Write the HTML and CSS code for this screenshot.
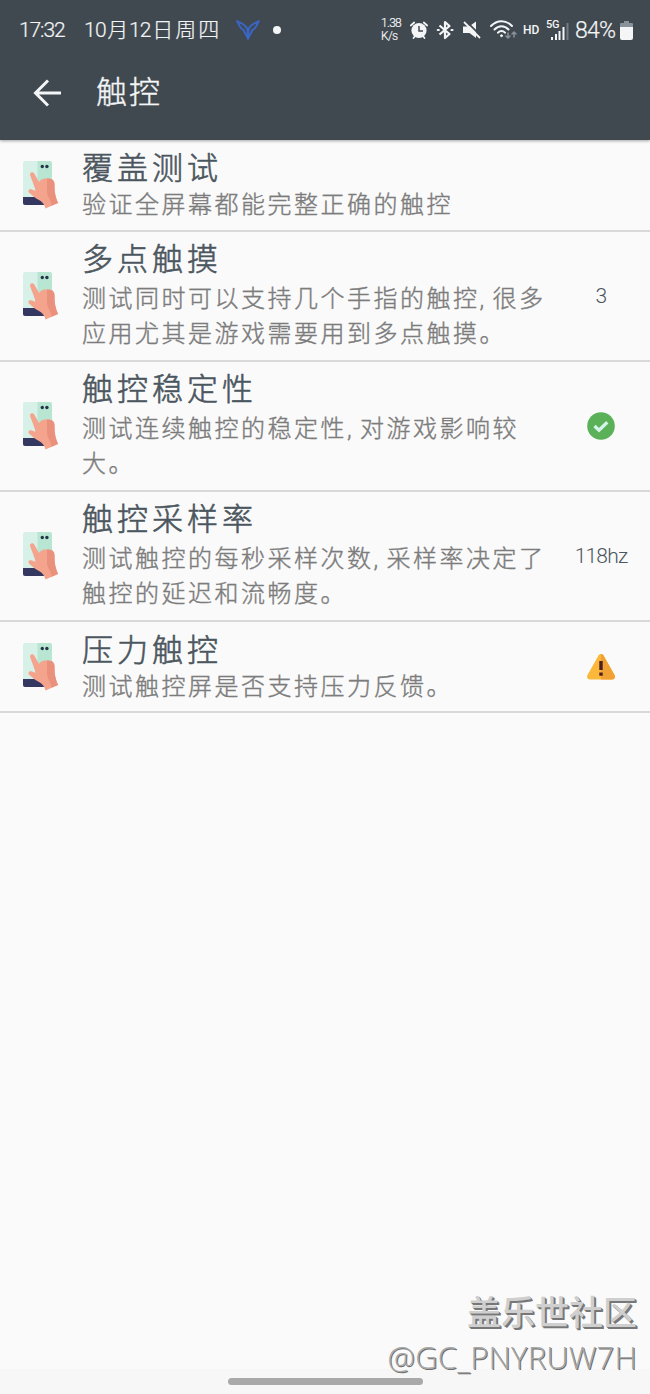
FILE: index.html
```html
<!DOCTYPE html>
<html lang="zh">
<head>
  <meta charset="UTF-8" />
  <meta name="viewport" content="width=device-width, initial-scale=1.0" />
  <title>触控</title>
  <link rel="stylesheet" href="styles.css">
</head>
<body>
  <!-- 图标定义 -->
  <svg class="defs" width="0" height="0">
    <symbol id="touch" viewBox="0 0 36 48">
      <path fill="#d8f1e8" d="M2 0h13v44H2a2 2 0 0 1-2-2V2a2 2 0 0 1 2-2z" />
      <path fill="#b9e5d3" d="M14.500 0H27a2 2 0 0 1 2 2v42H14.500z" />
      <path fill="#343860" d="M0 36h22v8H2a2 2 0 0 1-2-2z" />
      <circle cx="19.300" cy="5.500" r="1.700" fill="#243746" />
      <circle cx="23.900" cy="5.500" r="1.700" fill="#243746" />
      <path fill="#f4a38c" d="M7.200 14.500c-1-3.500 3-4.500 4.300-1.500L16 21c1.500-2 3.500-3.200 6-3.400 6-.8 10 1.400 9.500 7.400-.2 6 1 11 3.500 17L22.500 47.500c-1-4-3-6.500-6.500-8.500-4-2-6-4-9-6.500-3-2.500-1-5 2-4l3.500 1.200c-1-5-3.500-10-5.300-15.200z" />
      <path fill="#e9917c" d="M24 17.600c6-.4 8 2.400 7.500 7.400-.2 6 1 11 3.500 17l-6.500 2.800C28 38 24 36 24 31z" />
    </symbol>
  </svg>

  <header class="header">
    <div class="status-bar">
      <span class="time">17:32</span>
      <span class="date">10<i>月</i>12<i>日</i><i>周</i><i>四</i></span>
      <svg class="bird" width="24" height="20" viewBox="0 0 24 20" fill="none" stroke="#3a66c8" stroke-width="2">
        <path d="M1.500 1.500C4 2.500 9 4 11 8.500c.8 2 1 5 1 8.500 0-3.500.2-6.500 1-8.500 2-4.500 7-6 9.500-7-1.500 4-3 7-6 8.500L12 18.500 7.500 10c-3-1.500-4.500-4.500-6-8.500z" />
      </svg>
      <span class="dot"></span>
      <div class="status-icons">
        <span class="speed">1.38<br>K/s</span>
        <svg class="alarm" width="18" height="18" viewBox="0 0 18 18">
          <circle cx="9" cy="9.500" r="7.600" fill="#f3f5f6" />
          <path d="M.8 4.500l3.400-3M17.200 4.500l-3.400-3M3.500 17l2-2.500M14.500 17l-2-2.500" stroke="#f3f5f6" stroke-width="1.700" stroke-linecap="round" />
          <path d="M9 5v5h4" fill="none" stroke="#414950" stroke-width="1.500" />
        </svg>
        <svg class="bt" width="18" height="20" viewBox="0 0 18 20" fill="none" stroke="#f3f5f6" stroke-width="2.200">
          <path d="M3.500 5.500l10 8.500L9 18V2l4.500 4-10 8.500" stroke-linejoin="round" />
          <path d="M1.800 10h1M15.500 10h1" stroke-linecap="round" />
        </svg>
        <svg class="mute" width="18" height="18" viewBox="0 0 18 18" fill="#f3f5f6">
          <path d="M0 5.500h6L13 .5V17l-6.500-5H0z" />
          <path d="M2.500-.5l17 17" stroke="#414950" stroke-width="1.800" />
          <path d="M1 1l16 16" stroke="#f3f5f6" stroke-width="1.800" />
        </svg>
        <svg class="wifi" width="27" height="20" viewBox="0 0 27 20" fill="none" stroke="#f3f5f6" stroke-width="2" stroke-linecap="round">
          <path d="M1 6c6-6.500 15-6.500 21 0M4.500 9.500c4-4.500 10-4.500 14 0M8 12.700c2-2.300 5-2.300 7 0" />
          <circle cx="11.500" cy="15.700" r="1" fill="#f3f5f6" stroke-width="1" />
          <path stroke="#89929a" stroke-width="1.500" d="M18 13v5M16 16l2 2 2-2M24 17v-5M22 14l2-2 2 2" />
        </svg>
        <span class="hd">HD</span>
        <div class="signal">
          <span class="net">5G</span>
          <svg width="20" height="17" viewBox="0 0 20 17">
            <path fill="#f3f5f6" d="M1 14h2v3H1zM5 11h2v6H5zM8.500 8h2v9h-2zM12.500 4h2v13h-2z" />
            <path fill="#737c83" d="M16.500 0h2v17h-2z" />
          </svg>
        </div>
        <span class="percent">84%</span>
        <svg class="battery" width="13" height="19" viewBox="0 0 13 19">
          <path fill="#88929a" d="M4 0h5v2h3a1 1 0 0 1 1 1v5H0V3a1 1 0 0 1 1-1h3z" />
          <path fill="#f3f5f6" d="M0 6h13v11a2 2 0 0 1-2 2H2a2 2 0 0 1-2-2z" />
        </svg>
      </div>
    </div>
    <div class="toolbar">
      <svg width="28" height="28" viewBox="0 0 28 28" fill="none" stroke="#f3f5f6" stroke-width="3">
        <path d="M15 1.500L2.500 14 15 26.500M2.500 14H28" />
      </svg>
      <h1>触控</h1>
    </div>
  </header>

  <main class="list">
    <section class="item">
      <svg class="item-icon"><use href="#touch" /></svg>
      <div class="item-text">
        <h2>覆盖测试</h2>
        <p>验证全屏幕都能完整正确的触控</p>
      </div>
    </section>
    <section class="item tall">
      <svg class="item-icon"><use href="#touch" /></svg>
      <div class="item-text">
        <h2>多点触摸</h2>
        <p>测试同时可以支持几个手指的触控, 很多<br>应用尤其是游戏需要用到多点触摸。</p>
      </div>
      <div class="result">3</div>
    </section>
    <section class="item tall">
      <svg class="item-icon"><use href="#touch" /></svg>
      <div class="item-text">
        <h2>触控稳定性</h2>
        <p>测试连续触控的稳定性, 对游戏影响较<br>大。</p>
      </div>
      <div class="result">
        <svg width="28" height="28" viewBox="0 0 28 28">
          <circle cx="14" cy="14" r="13.800" fill="#5bb158" />
          <path d="M7.500 14l4.500 4.200 8.300-8" fill="none" stroke="#d5f3eb" stroke-width="3.300" />
        </svg>
      </div>
    </section>
    <section class="item tall">
      <svg class="item-icon"><use href="#touch" /></svg>
      <div class="item-text">
        <h2>触控采样率</h2>
        <p>测试触控的每秒采样次数, 采样率决定了<br>触控的延迟和流畅度。</p>
      </div>
      <div class="result">118hz</div>
    </section>
    <section class="item">
      <svg class="item-icon"><use href="#touch" /></svg>
      <div class="item-text">
        <h2>压力触控</h2>
        <p>测试触控屏是否支持压力反馈。</p>
      </div>
      <div class="result">
        <svg width="28" height="26" viewBox="0 0 28 26">
          <path fill="#fbb83b" d="M11.500 1.500c1.200-2 3.800-2 5 0L27.500 21c1.200 2.500 0 4.500-2.500 4.500H3c-2.500 0-3.700-2-2.500-4.500z" />
          <path fill="#f2a233" d="M14 0c1 0 2 .5 2.500 1.500L27.500 21c1.200 2.500 0 4.500-2.500 4.500H14z" />
          <path fill="#4a2024" d="M12.300 7h3.400v9h-3.400zM12.300 18.500h3.400v3.200h-3.400z" />
        </svg>
      </div>
    </section>
  </main>

  <footer class="nav-bar"><span class="handle"></span></footer>

  <div class="watermark">
    <div class="brand">盖乐世社区</div>
    <div class="user">@GC_PNYRUW7H</div>
  </div>
</body>
</html>
```
FILE: styles.css
```css
:root {
  --bg: #fafafa;
  --header: #414950;
  --light: #f3f5f6;
  --title: #4b565e;
  --muted: #7c7c7c;
  --border: #d9d9d9;
}

* {
  box-sizing: border-box;
}

body {
  margin: 0;
  height: 1394px;
  display: flex;
  flex-direction: column;
  background: var(--bg);
  color: var(--title);
  font-family: Roboto, 'Noto Sans CJK SC', sans-serif;
  font-weight: 300;
  overflow: hidden;
}

h1, h2, p {
  margin: 0;
  font-weight: 300;
}

svg {
  display: block;
  flex: none;
}

.defs {
  position: absolute;
}

.header {
  height: 140px;
  flex: none;
  background: var(--header);
  color: var(--light);
  box-shadow: 0 1px 3px rgba(0, 0, 0, 0.35);
}

.status-bar {
  display: flex;
  align-items: center;
  height: 60px;
  padding: 0 17px 0 19px;
  white-space: nowrap;
}

.time {
  width: 65px;
  font-size: 21px;
  letter-spacing: -1.1px;
  -webkit-text-stroke: 0.2px;
}

.date {
  display: flex;
  align-items: center;
  width: 152px;
  font-size: 21px;
  line-height: 30px;
  letter-spacing: -0.7px;
  -webkit-text-stroke: 0.2px;
}

.date i {
  font-style: normal;
  width: 23px;
  text-align: center;
}

.dot {
  width: 8px;
  height: 8px;
  margin-left: 13px;
  border-radius: 50%;
  background: var(--light);
}

.status-icons {
  display: flex;
  align-items: center;
  margin-left: auto;
}

.speed {
  width: 29px;
  font-size: 12px;
  line-height: 13px;
  letter-spacing: -0.7px;
  -webkit-text-stroke: 0.2px;
}

.bt {
  margin-left: 8px;
}

.mute {
  margin-left: 9px;
}

.wifi {
  margin-left: 9px;
}

.hd {
  width: 17px;
  margin-left: 6px;
  font-size: 12px;
  font-weight: 500;
}

.signal {
  display: flex;
  align-items: flex-end;
  width: 23px;
  height: 20px;
  margin-left: 6px;
}

.net {
  align-self: flex-start;
  width: 4px;
  font-size: 11px;
  line-height: 10px;
  font-weight: 500;
  letter-spacing: -0.3px;
}

.percent {
  width: 45px;
  margin-left: 6px;
  font-size: 23px;
  letter-spacing: -0.8px;
  -webkit-text-stroke: 0.2px;
}

.toolbar {
  display: flex;
  align-items: center;
  height: 66px;
  padding-left: 33px;
}

.toolbar h1 {
  margin-left: 35px;
  font-size: 31px;
  line-height: 40px;
  letter-spacing: 2px;
  -webkit-text-stroke: 0.4px;
}

.item {
  display: flex;
  align-items: center;
  height: 92px;
  padding-left: 23px;
  border-bottom: 2px solid var(--border);
}

.item.tall {
  height: 130px;
}

.item:last-child {
  height: 91px;
}

.item-icon {
  width: 36px;
  height: 48px;
}

.item-text {
  flex: none;
  width: 493px;
  padding-top: 2px;
  padding-left: 23px;
  white-space: nowrap;
}

.item.tall .item-text {
  padding-top: 0;
}

.item-text h2 {
  font-size: 31px;
  line-height: 39px;
  letter-spacing: 4px;
  -webkit-text-stroke: 0.6px;
}

.item-text p {
  color: var(--muted);
  font-size: 24px;
  line-height: 35px;
  letter-spacing: 2.5px;
  word-spacing: -2.5px;
  -webkit-text-stroke: 0.4px;
}

.item.tall p {
  padding-top: 3px;
}

.result {
  flex: none;
  display: flex;
  justify-content: center;
  width: 98px;
  font-size: 21px;
  letter-spacing: -0.8px;
}

.nav-bar {
  display: flex;
  justify-content: center;
  height: 25px;
  margin-top: auto;
  padding-top: 9px;
  background: #f7f7f7;
}

.handle {
  width: 195px;
  height: 7px;
  border-radius: 4px;
  background: #a9a9a9;
}

/* 水印浮在页面右下角 */
.watermark {
  position: absolute;
  right: 13px;
  bottom: 15px;
  text-align: right;
  color: #cfcfcf;
  text-shadow: 1px 1px 0 #777, 2px 2px 0 #777;
}

.brand {
  font-size: 34px;
  line-height: 43px;
  font-weight: 500;
}

.user {
  font-family: 'Open Sans', sans-serif;
  font-size: 31px;
  line-height: 44px;
  font-weight: 300;
  letter-spacing: 0.2px;
  color: #a8a8a8;
  text-shadow: 1px 1px 0 #6f6f6f;
}
```
